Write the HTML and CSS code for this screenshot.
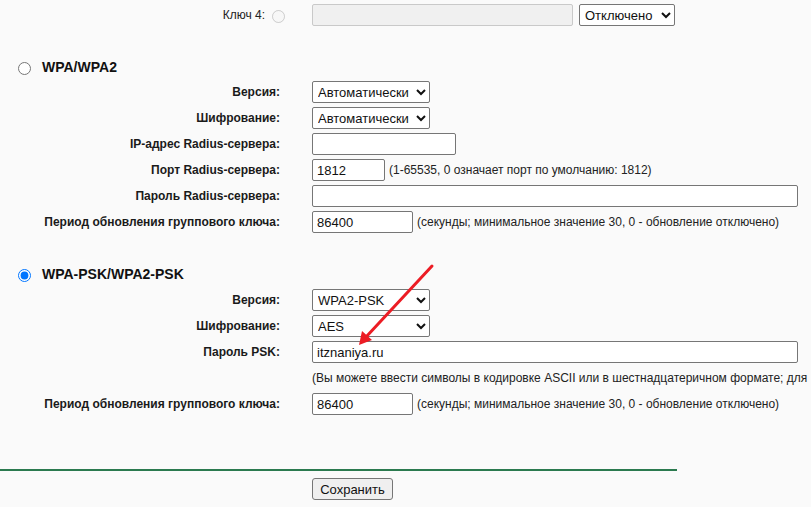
FILE: index.html
```html
<!DOCTYPE html>
<html lang="ru">
<head>
<meta charset="utf-8">
<title>Беспроводная защита</title>
<link rel="stylesheet" href="styles.css">
</head>
<body>
<div class="page">
  <div class="row key-row">
    <span class="key-label">Ключ 4:</span>
    <input type="radio" class="key-radio" disabled>
    <input type="text" class="inp key-inp" disabled>
    <select class="sel key-sel"><option>Отключено</option></select>
  </div>

  <div class="head head-first">
    <input type="radio" name="sec" class="head-radio">
    <span class="head-text">WPA/WPA2</span>
  </div>
  <div class="row"><label class="lbl">Версия:</label><select class="sel sel-md"><option>Автоматически</option></select></div>
  <div class="row"><label class="lbl">Шифрование:</label><select class="sel sel-md"><option>Автоматически</option></select></div>
  <div class="row"><label class="lbl">IP-адрес Radius-сервера:</label><input type="text" class="inp w-ip"></div>
  <div class="row"><label class="lbl">Порт Radius-сервера:</label><input type="text" class="inp w-port" value="1812"><span class="hint">(1-65535, 0 означает порт по умолчанию: 1812)</span></div>
  <div class="row"><label class="lbl">Пароль Radius-сервера:</label><input type="text" class="inp w-long"></div>
  <div class="row"><label class="lbl">Период обновления группового ключа:</label><input type="text" class="inp w-period" value="86400"><span class="hint">(секунды; минимальное значение 30, 0 - обновление отключено)</span></div>

  <div class="head head-second">
    <input type="radio" name="sec" class="head-radio" checked>
    <span class="head-text">WPA-PSK/WPA2-PSK</span>
  </div>
  <div class="row"><label class="lbl">Версия:</label><select class="sel sel-md"><option>WPA2-PSK</option></select></div>
  <div class="row"><label class="lbl">Шифрование:</label><select class="sel sel-md"><option>AES</option></select></div>
  <div class="row"><label class="lbl">Пароль PSK:</label><input type="text" class="inp w-long" value="itznaniya.ru"></div>
  <div class="row"><span class="lbl"></span><span class="hint hint-flush">(Вы можете ввести символы в кодировке ASCII или в шестнадцатеричном формате; для</span></div>
  <div class="row"><label class="lbl">Период обновления группового ключа:</label><input type="text" class="inp w-period" value="86400"><span class="hint">(секунды; минимальное значение 30, 0 - обновление отключено)</span></div>

  <hr class="sep">
  <div class="actions"><button type="button" class="btn">Сохранить</button></div>

  <svg class="arrow" width="811" height="507" viewBox="0 0 811 507" aria-hidden="true">
    <line x1="432" y1="266" x2="366" y2="337" stroke="#ec1c24" stroke-width="3" stroke-linecap="round"/>
    <polygon points="359,345 362,331 372,340" fill="#ec1c24"/>
  </svg>
</div>
</body>
</html>
```

FILE: styles.css
```css
html, body {
  margin: 0;
  padding: 0;
  overflow: hidden;
  background: #fafafa;
}

body {
  font-family: "Liberation Sans", Arial, sans-serif;
  font-size: 12px;
  color: #1a1a1a;
}

.page {
  position: relative;
  width: 811px;
  height: 507px;
  padding-top: 2px;
  box-sizing: border-box;
}

.row {
  display: flex;
  align-items: center;
  height: 26px;
  white-space: nowrap;
}

.lbl {
  flex: 0 0 280px;
  text-align: right;
  font-weight: bold;
  margin-right: 32px;
}

.inp {
  box-sizing: border-box;
  height: 22px;
  border: 1px solid #767676;
  border-radius: 2px;
  background: #fff;
  padding: 1px 4px;
  font-family: "Liberation Sans", Arial, sans-serif;
  font-size: 13px;
  color: #111;
}

.sel {
  box-sizing: border-box;
  height: 22px;
  border: 1px solid #767676;
  border-radius: 2px;
  background: #fff;
  font-family: "Liberation Sans", Arial, sans-serif;
  font-size: 13px;
  color: #111;
  padding: 0 1px;
}

.key-label {
  flex: 0 0 265px;
  text-align: right;
  color: #222;
}

.key-radio {
  margin: 2px 0 0 7px;
  width: 13px;
  height: 13px;
}

.inp.key-inp {
  margin-left: 27px;
  width: 261px;
  background: #f0f0f0;
  border-color: #c9c9c9;
}

.sel.key-sel {
  margin-left: 6px;
  width: 96px;
}

.sel-md { width: 118px; }
.w-ip { width: 144px; }
.w-port { width: 73px; }
.w-long { width: 486px; }
.w-period { width: 101px; }

.hint {
  margin-left: 4px;
  color: #222;
}

.hint-flush {
  margin-left: 0;
}

.head {
  display: flex;
  align-items: center;
  height: 26px;
  padding-left: 18px;
}

.head-first {
  margin-top: 26px;
  height: 25px;
}

.head-second {
  margin-top: 26px;
}

.head-radio {
  margin: 3px 11px 0 0;
  width: 13px;
  height: 13px;
}

.head-text {
  font-weight: bold;
  font-size: 14px;
  color: #111;
}

.sep {
  margin: 52px 0 0 0;
  width: 677px;
  height: 2px;
  border: 0;
  background: #2b7a4f;
}

.actions {
  display: flex;
  padding: 7px 0 0 312px;
}

.btn {
  box-sizing: border-box;
  height: 22px;
  width: 81px;
  padding: 0;
  border: 1px solid #767676;
  border-radius: 3px;
  background: #efefef;
  font-family: "Liberation Sans", Arial, sans-serif;
  font-size: 13px;
  color: #111;
}

.arrow {
  position: absolute;
  left: 0;
  top: 0;
  pointer-events: none;
}
```
